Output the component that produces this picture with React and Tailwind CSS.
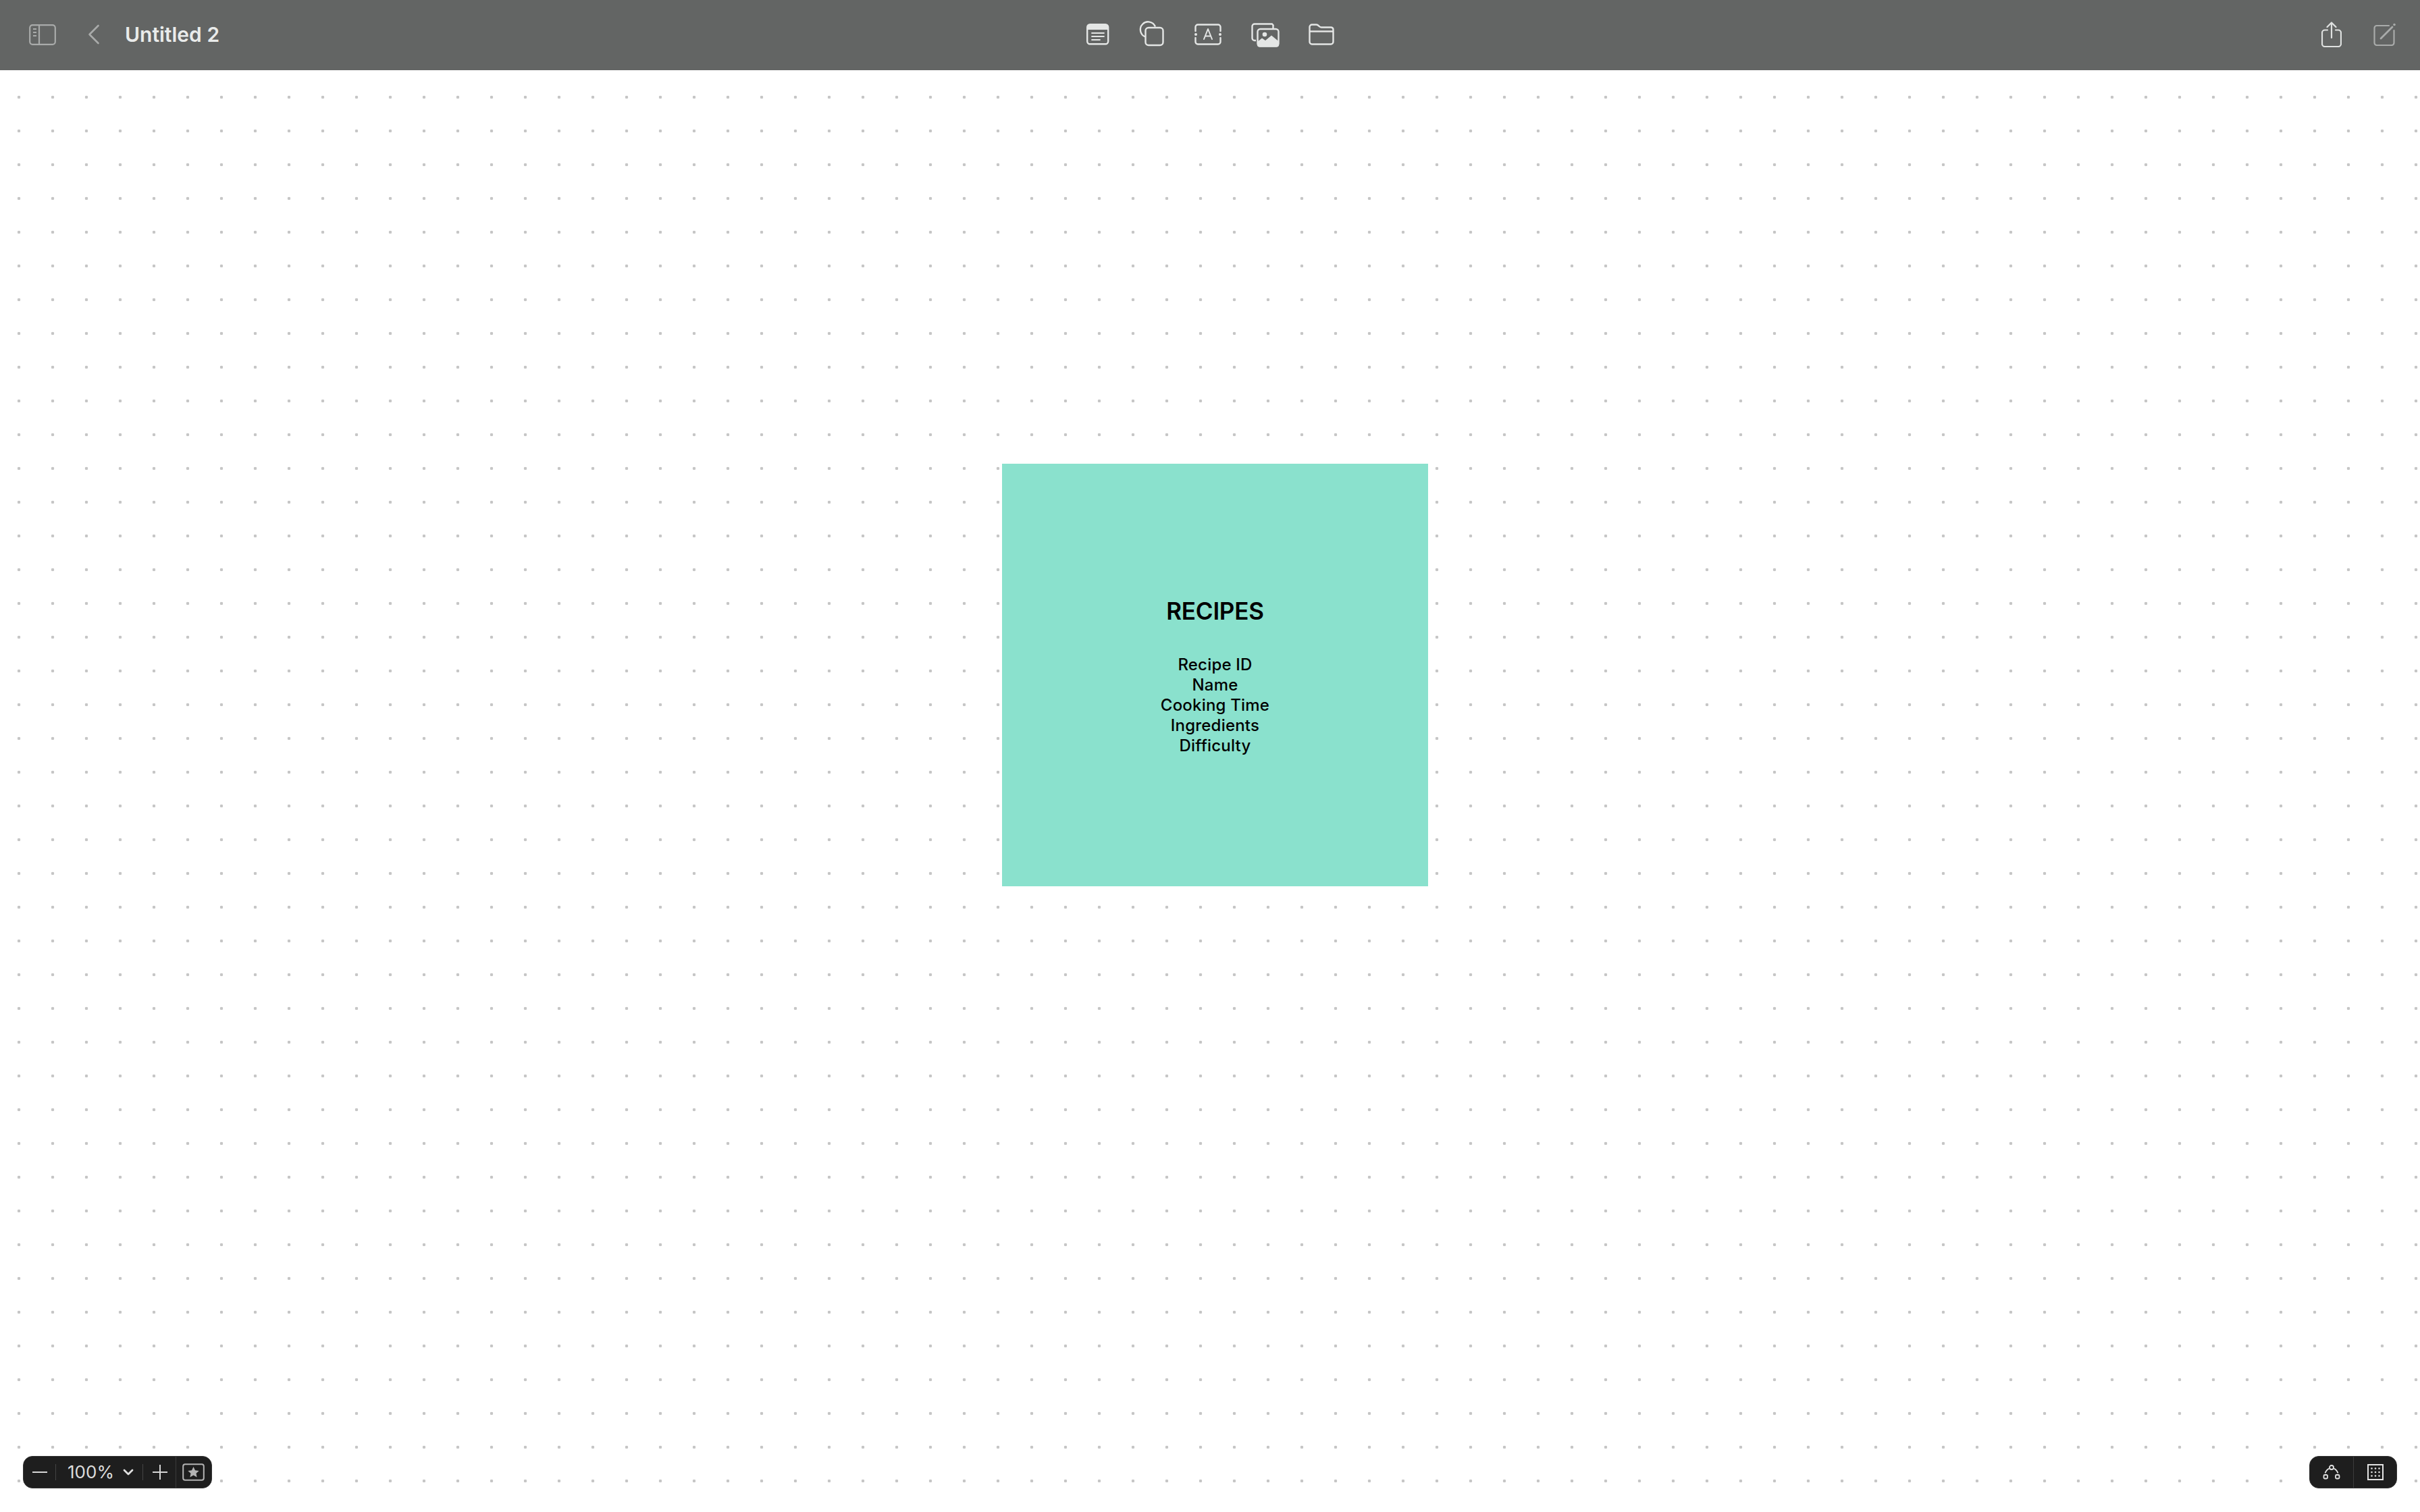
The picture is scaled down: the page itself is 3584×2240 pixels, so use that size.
const font = "font-['Inter',sans-serif]";

function NotesIcon() {
  return (
    <svg width="34" height="32" viewBox="0 0 34 32" fill="none" stroke="#e4e6e5" strokeWidth="2.4" strokeLinecap="round">
      <rect x="1.2" y="1.2" width="31" height="29" rx="4" />
      <path d="M1.5 9V5a4 4 0 0 1 4-4h22.500a4 4 0 0 1 4 4v4z" fill="#e4e6e5" stroke="none" />
      <path d="M8 14h18M8 19h18M8 24h12" strokeWidth="1.800" />
    </svg>
  );
}

function ShapesIcon() {
  return (
    <svg width="40" height="40" viewBox="0 0 40 40" fill="none" stroke="#e4e6e5" strokeWidth="2.400">
      <path d="M11 24.500A11.500 11.500 0 1 1 26 9.500" />
      <rect x="11.500" y="11" width="26" height="26" rx="4.500" />
    </svg>
  );
}

function TextBoxIcon() {
  return (
    <svg width="40" height="32" viewBox="0 0 40 32" fill="none" stroke="#e4e6e5" strokeWidth="2.400" strokeLinecap="round" strokeLinejoin="round">
      <path d="M1.500 11V5a3.500 3.500 0 0 1 3.500-3.500h30A3.500 3.500 0 0 1 38.500 5v6M1.500 21v6A3.500 3.500 0 0 0 5 30.500h30a3.500 3.500 0 0 0 3.500-3.500v-6" />
      <circle cx="2" cy="16" r="2" fill="#e4e6e5" stroke="none" />
      <circle cx="38" cy="16" r="2" fill="#e4e6e5" stroke="none" />
      <path d="M14 23l6-15 6 15M16 18.500h8" strokeWidth="2" />
    </svg>
  );
}

function MediaIcon() {
  return (
    <svg width="42" height="36" viewBox="0 0 42 36" fill="none" stroke="#e4e6e5" strokeWidth="2.400" strokeLinejoin="round">
      <path d="M7 26H5a3.500 3.500 0 0 1-3.500-3.500V5A3.500 3.500 0 0 1 5 1.500h26A3.500 3.500 0 0 1 32.500 5v3" />
      <rect x="9.500" y="9" width="31" height="25.500" rx="4" />
      <circle cx="20" cy="17" r="3.300" fill="#e4e6e5" stroke="none" />
      <path d="M9 32v-4l7-5.500 5 3.500 9-7.500 11 9v5a3 3 0 0 1-3 3H12a3 3 0 0 1-3-3z" fill="#e4e6e5" stroke="none" />
    </svg>
  );
}

function FolderIcon() {
  return (
    <svg width="38" height="32" viewBox="0 0 38 32" fill="none" stroke="#e4e6e5" strokeWidth="2.400" strokeLinejoin="round">
      <path d="M1.500 11V5A3.500 3.500 0 0 1 5 1.500h6.500c2 0 2.800 1 4 2.300 1 1.200 1.800 1.700 3.500 1.700h14.500A3.500 3.500 0 0 1 36.500 9v18a3.500 3.500 0 0 1-3.500 3.500H5A3.500 3.500 0 0 1 1.500 27z" />
      <path d="M1.500 11.500h35" />
    </svg>
  );
}

function ZoomBar() {
  return (
    <div className="flex items-center w-[280px] h-[48px] rounded-[14px] bg-[#1e1e1e] border border-[#333333] text-[#dcdcdc]">
      <svg className="ml-[13px]" width="22" height="4" viewBox="0 0 22 4"><path d="M0 2h22" stroke="#d6d6d6" strokeWidth="2" /></svg>
      <div className="w-[1px] h-[24px] bg-[#444444] ml-[12px]" />
      <span className="ml-[17px] w-[67px] text-[26px] leading-none">100%</span>
      <svg className="ml-[15px]" width="16" height="10" viewBox="0 0 16 10" fill="none" stroke="#e0e0e0" strokeWidth="2.800" strokeLinecap="round" strokeLinejoin="round">
        <path d="M2 2l6 6 6-6" />
      </svg>
      <div className="w-[1px] h-[24px] bg-[#444444] ml-[13px]" />
      <svg className="ml-[14px]" width="22" height="22" viewBox="0 0 22 22"><path d="M0 11h22M11 0v22" stroke="#d6d6d6" strokeWidth="2" /></svg>
      <div className="w-[1px] h-full bg-[#3c3c3c] ml-[12px]" />
      <svg className="ml-[9px]" width="33" height="26" viewBox="0 0 33 26" fill="none">
        <rect x="1.200" y="1.200" width="30.600" height="23.600" rx="3" stroke="#b4b4b4" strokeWidth="2" />
        <path d="M16.500 5l2.500 5.200 5.700.7-4.200 3.900 1.100 5.600-5.100-2.800-5.100 2.800 1.100-5.600-4.200-3.900 5.700-.7z" fill="#b4b4b4" />
      </svg>
    </div>
  );
}

function ViewBar() {
  return (
    <div className="flex items-center w-[130px] h-[48px] rounded-[14px] bg-[#1e1e1e] border border-[#333333]">
      <div className="w-[64px] flex justify-center">
        <svg width="26" height="22" viewBox="0 0 26 22" fill="none" stroke="#e2e2e2" strokeWidth="1.800">
          <circle cx="13" cy="4" r="3" />
          <rect x="1.500" y="15" width="5.500" height="5.500" rx="1.500" />
          <rect x="19" y="15" width="5.500" height="5.500" rx="1.500" />
          <path d="M3.500 12.500C4.500 9.500 6.500 7 9.500 5.500M22.500 12.500C21.500 9.500 19.500 7 16.500 5.500" />
        </svg>
      </div>
      <div className="w-[1px] h-full bg-[#3c3c3c]" />
      <div className="flex-1 flex justify-center">
        <svg width="24" height="24" viewBox="0 0 24 24" fill="none">
          <rect x="1" y="1" width="22" height="22" stroke="#e2e2e2" strokeWidth="2" />
          <g fill="#e2e2e2">
            {[6.500, 12, 17.500].map((y) =>
              [6.500, 12, 17.500].map((x) => <circle key={`${x}-${y}`} cx={x} cy={y} r="1.300" />)
            )}
          </g>
        </svg>
      </div>
    </div>
  );
}

export default function App() {
  return (
    <div className={`${font} w-[3584px] h-[2240px] flex flex-col bg-white overflow-hidden`}>
      <header className="h-[104px] shrink-0 flex items-center pb-[2px] bg-[#636564]">
        <div className="w-[1609px] flex items-center pl-[43px]">
          <svg width="40" height="31" viewBox="0 0 40 31" fill="none" stroke="#a9abaa" strokeWidth="2.200">
            <rect x="1.200" y="1.200" width="37.600" height="28.600" rx="4" />
            <path d="M15 1.500v28" />
            <path d="M6 7h5M6 12h5M6 17h5" strokeWidth="1.800" />
          </svg>
          <svg className="ml-[47px]" width="18" height="30" viewBox="0 0 18 30" fill="none" stroke="#a9abaa" strokeWidth="2.600" strokeLinecap="round" strokeLinejoin="round">
            <path d="M15.500 2L2.500 15l13 13" />
          </svg>
          <span className="ml-[37px] text-[30px] font-semibold leading-none text-[#e9ebea]">Untitled 2</span>
        </div>
        <div className="flex items-center">
          <NotesIcon />
          <div className="ml-[42px] -mt-[2px]"><ShapesIcon /></div>
          <div className="ml-[44px]"><TextBoxIcon /></div>
          <div className="ml-[44px] mt-[2px]"><MediaIcon /></div>
          <div className="ml-[43px]"><FolderIcon /></div>
        </div>
        <div className="ml-auto flex items-center pr-[35px]">
          <svg width="30" height="38" viewBox="0 0 30 38" fill="none" stroke="#dfe1e0" strokeWidth="2.200" strokeLinecap="round" strokeLinejoin="round">
            <path d="M9 12.500H5a4 4 0 0 0-4 4V33a4 4 0 0 0 4 4h20a4 4 0 0 0 4-4V16.500a4 4 0 0 0-4-4h-4" />
            <path d="M15 24V2M8.500 8L15 1.500 21.500 8" />
          </svg>
          <svg className="ml-[47px]" width="34" height="34" viewBox="0 0 34 34" fill="none" stroke="#a9abaa" strokeWidth="2.200" strokeLinecap="round">
            <path d="M23 4H5a3.500 3.500 0 0 0-3.500 3.500v22A3.500 3.500 0 0 0 5 33h22a3.500 3.500 0 0 0 3.500-3.500V11" />
            <path d="M11 23l17-17" strokeWidth="2.800" />
            <circle cx="31" cy="2.500" r="1.800" fill="#a9abaa" stroke="none" />
          </svg>
        </div>
      </header>

      <main className="relative flex-1 bg-white bg-[radial-gradient(circle,#c6c6c6_2px,transparent_2.600px)] bg-[size:50px_50px] bg-[position:3px_15px]">
        <div className="absolute left-[1484px] top-[583px] w-[631px] h-[626px] bg-[#8ae1cd] flex flex-col items-center text-center text-black">
          <div className="mt-[196px] text-[35px] font-semibold tracking-[-0.2px] leading-[44px]">RECIPES</div>
          <div className="mt-[43px] text-[24px] font-medium tracking-[0.2px] leading-[30px]">
            <div>Recipe ID</div>
            <div>Name</div>
            <div>Cooking Time</div>
            <div>Ingredients</div>
            <div>Difficulty</div>
          </div>
        </div>
        <div className="absolute inset-x-[34px] bottom-[35px] flex justify-between">
          <ZoomBar />
          <ViewBar />
        </div>
      </main>
    </div>
  );
}
